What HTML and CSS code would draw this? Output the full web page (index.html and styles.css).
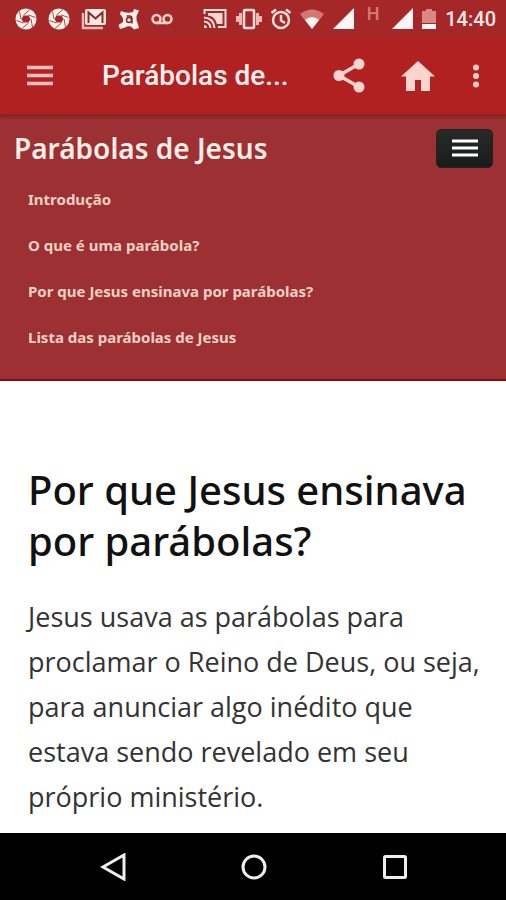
FILE: index.html
```html
<!DOCTYPE html>
<html lang="pt-BR">
<head>
<meta charset="utf-8">
<meta name="viewport" content="width=device-width, initial-scale=1">
<title>Parábolas de Jesus</title>
<link rel="stylesheet" href="styles.css">
</head>
<body>
<svg class="defs" aria-hidden="true">
  <symbol id="aperture" viewBox="0 0 22 22">
    <circle cx="11" cy="11" r="10.5" fill="#fff1ec"/>
    <path d="M8.500 7.500h5l2 3.500-2 3.500h-5l-2-3.500z" fill="#a52626"/>
    <path d="M8.500 7 15 1.500M13.500 7l7 2.500M16 11l1.500 8M13.500 15 7 20.500M8.500 15l-7-2.500M6 11 4.500 3.500" stroke="#a84a45" stroke-width="1" fill="none"/>
  </symbol>
  <symbol id="signal" viewBox="0 0 22 22"><path d="M0 22 22 0v22z" fill="#fff5f2"/></symbol>
</svg>
<header class="status">
  <div class="group notes">
    <svg width="22" height="22"><use href="#aperture"/></svg>
    <svg width="22" height="22"><use href="#aperture"/></svg>
    <svg width="26" height="22" viewBox="0 0 26 22">
      <path d="M2 5v15h20" fill="none" stroke="#efb9b2" stroke-width="2.500"/>
      <rect x="4" y="1" width="21" height="16" rx="2" fill="#ffe9e4"/>
      <path d="M7.500 15V4.500l7 6 7-6V15" fill="none" stroke="#8e2424" stroke-width="2"/>
    </svg>
    <svg width="22" height="22" viewBox="0 0 22 22">
      <path d="M3 3q6 3 12 1l1-3 5 1.500L18.500 8q-.5 4 1 7l1.500 5-5 1.500-3-3q-3-1-6 1L2 21 .5 17 5 14Q6 10 2 6z" fill="#fff1ec"/>
      <circle cx="11" cy="12" r="2.500" fill="none" stroke="#8e2424" stroke-width="1.500"/>
      <path d="M8.500 8h3q2.500 0 2.500 3v4.500" fill="none" stroke="#8e2424" stroke-width="1.500"/>
    </svg>
    <svg width="22" height="22" viewBox="0 0 22 22">
      <g fill="none" stroke="#f6d3cc" stroke-width="2.500"><circle cx="5.500" cy="11" r="4"/><circle cx="16.500" cy="11" r="4"/><path d="M5 15h12"/></g>
    </svg>
  </div>
  <div class="group system">
    <svg width="24" height="22" viewBox="0 0 24 22">
      <path d="M1.500 6V2h21v17H15" fill="none" stroke="#ffe1db" stroke-width="2"/>
      <path d="M5 5h14.500v11H14Q12 8 5 7.500z" fill="#ffd9d2"/>
      <path d="M1 9.500q9.500.5 10.500 10.500M1 13.500Q7 14 7.500 20" fill="none" stroke="#ffe1db" stroke-width="2"/><path d="M1 17q3 0 3 3H1z" fill="#ffe1db"/>
    </svg>
    <svg width="26" height="22" viewBox="0 0 26 22">
      <rect x="8" y="2" width="10" height="18" rx="1" fill="none" stroke="#ffe1db" stroke-width="2.500"/>
      <path d="M4.500 5v12M21.500 5v12" stroke="#f2b9b2" stroke-width="3"/><path d="M1.500 8v6M24.500 8v6" stroke="#f2b9b2" stroke-width="3"/>
    </svg>
    <svg width="20" height="22" viewBox="1 0 20 22">
      <g fill="none" stroke="#ffe1db" stroke-width="2.400"><circle cx="11" cy="12" r="8"/><path d="M11 7v5.500l4 2.500M1.500 5 6 1.500M20.500 5 16 1.500"/></g>
    </svg>
    <svg width="24" height="20" viewBox="0 0 24 20">
      <path d="M0 5Q12-4 24 5L12 20z" fill="#d37772"/><path d="M5 11Q12 5 19 11L12 20z" fill="#fff5f2"/>
    </svg>
    <svg width="21" height="21"><use href="#signal"/></svg>
    <span class="network">H</span>
    <svg width="21" height="21"><use href="#signal"/></svg>
    <svg width="14" height="22" viewBox="0 0 14 22">
      <path d="M0 3h4V1h6v2h4v12H0z" fill="#d98883"/><path d="M0 16h14v5H0z" fill="#fff5f2"/>
    </svg>
    <time>14:40</time>
  </div>
</header>
<div class="appbar">
  <button class="icon" aria-label="Menu"><svg width="28" height="22" viewBox="0 0 28 22"><path d="M1 2.500h26M1 10.500h26M1 18.500h26" stroke="#f8bfba" stroke-width="3.500"/></svg></button>
  <div class="title">Parábolas de...</div>
  <div class="actions">
    <button class="icon" aria-label="Compartilhar"><svg width="34" height="36" viewBox="0 0 34 36"><path d="M27 6 7 17.500 27 29" fill="none" stroke="#fcd5cf" stroke-width="3.500"/><g fill="#fcd5cf"><circle cx="27" cy="6" r="5.500"/><circle cx="7" cy="17.500" r="5.500"/><circle cx="27" cy="29" r="5.500"/></g></svg></button>
    <button class="icon" aria-label="Início"><svg width="34" height="30" viewBox="0 0 34 30"><path d="M17 0 34 15.500h-5V30H20V19h-6v11H5V15.500H0z" fill="#fcd5cf"/></svg></button>
    <button class="icon" aria-label="Mais opções"><svg width="12" height="24" viewBox="0 0 12 24"><g fill="#fcd0ca"><circle cx="6" cy="3.500" r="3"/><circle cx="6" cy="12" r="3"/><circle cx="6" cy="20.500" r="3"/></g></svg></button>
  </div>
</div>
<nav class="sitenav">
  <div class="brandrow">
    <a class="brand" href="#">Parábolas de Jesus</a>
    <button class="toggle" aria-label="Alternar navegação"><svg width="26" height="20" viewBox="0 0 26 20"><path d="M0 3h26M0 10h26M0 17h26" stroke="#fff" stroke-width="3"/></svg></button>
  </div>
  <ul class="links">
    <li><a href="#">Introdução</a></li>
    <li><a href="#">O que é uma parábola?</a></li>
    <li><a href="#">Por que Jesus ensinava por parábolas?</a></li>
    <li><a href="#">Lista das parábolas de Jesus</a></li>
  </ul>
</nav>
<main>
  <h1>Por que Jesus ensinava por parábolas?</h1>
  <p>Jesus usava as parábolas para proclamar o Reino de Deus, ou seja, para anunciar algo inédito que estava sendo revelado em seu próprio ministério.</p>
</main>
<footer class="navbar">
  <button class="icon" aria-label="Voltar"><svg width="26" height="28" viewBox="0 0 26 28"><path d="M24 2v24L3 14z" fill="none" stroke="#eee" stroke-width="3"/></svg></button>
  <button class="icon" aria-label="Tela inicial"><svg width="26" height="26" viewBox="0 0 26 26"><circle cx="13" cy="13" r="11" fill="none" stroke="#eee" stroke-width="3"/></svg></button>
  <button class="icon" aria-label="Recentes"><svg width="26" height="26" viewBox="0 0 26 26"><rect x="2.500" y="2.500" width="21" height="21" rx="1" fill="none" stroke="#eee" stroke-width="3"/></svg></button>
</footer>
</body>
</html>
```
FILE: styles.css
```css
* { box-sizing: border-box; }
body {
  margin: 0;
  min-height: 100vh;
  display: flex;
  flex-direction: column;
  background: #fff;
  font-family: "Noto Sans", "Open Sans", sans-serif;
}
svg { display: block; flex: none; }
a { color: inherit; text-decoration: none; }
.defs { position: absolute; width: 0; height: 0; }
.icon {
  display: grid;
  place-items: center;
  padding: 0;
  border: 0;
  background: none;
}
.status {
  display: flex;
  justify-content: space-between;
  align-items: center;
  height: 37px;
  padding: 0 10px 0 15px;
  background: #a62727;
  font-family: Roboto, sans-serif;
  color: #ffebe7;
}
.group { display: flex; align-items: center; }
.notes { gap: 11px; }
.system { gap: 9px; }
.network {
  align-self: flex-start;
  width: 20px;
  text-align: center;
  font-size: 18px;
  line-height: 12px;
  font-weight: 500;
  color: #d77c78;
}
.status time { font-size: 20px; line-height: 22px; font-weight: 500; }
.appbar {
  display: flex;
  align-items: center;
  height: 78px;
  padding: 0 24px 0 26px;
  background: #b12121;
  border-bottom: 1px solid #982020;
  box-shadow: 0 2px 3px #00000040;
  position: relative;
}
.title {
  flex: 1;
  margin-left: 48px;
  font: 500 28px/36px Roboto, sans-serif;
  color: #fff1ed;
}
.actions { display: flex; align-items: center; gap: 35px; }
.sitenav {
  padding: 13px 13px 19px 14px;
  background: #9c3033;
  border-bottom: 2px solid #850c0f;
}
.brandrow { display: flex; justify-content: space-between; align-items: center; }
.brand { font-size: 28px; line-height: 40px; font-weight: 600; color: #ffeee7; }
.toggle {
  display: grid;
  place-items: center;
  width: 57px;
  height: 39px;
  padding: 0;
  border: 1px solid #282020;
  border-radius: 5px;
  background: linear-gradient(#262a29, #181d1c);
}
.links {
  margin: 8px 0 0;
  padding: 0 0 0 14px;
  list-style: none;
  font-size: 15px;
  line-height: 46px;
  font-weight: 700;
  color: #f0d0c4;
}
main { flex: 1; padding: 83px 20px 12px 28px; }
h1 {
  margin: 0;
  font-size: 40px;
  line-height: 51px;
  font-weight: 500;
  color: #111;
}
p {
  margin: 28px 0 0;
  font-family: "Open Sans", sans-serif;
  font-size: 27px;
  line-height: 45px;
  font-weight: 400;
  color: #333;
}
.navbar {
  display: flex;
  justify-content: space-between;
  align-items: center;
  height: 67px;
  padding: 0 98px 0 100px;
  background: #000;
}
```
